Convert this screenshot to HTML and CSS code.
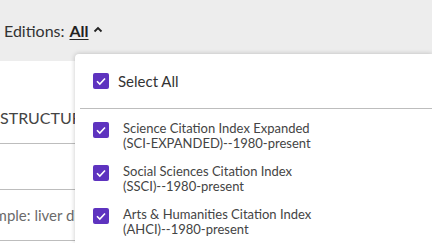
FILE: index.html
```html
<!DOCTYPE html>
<html>
<head>
<meta charset="utf-8">
<link rel="stylesheet" href="styles.css">
</head>
<body>
<div class="header">
  <span class="label">Editions:</span>
  <span class="value">All</span>
  <svg class="caret" width="10" height="7" viewBox="0 0 10 7"><path d="M1.5 5.5 L5 2 L8.5 5.5" fill="none" stroke="#222" stroke-width="1.8"/></svg>
</div>
<div class="content">
  <div class="row row-first"><span class="field-text">STRUCTURE</span></div>
  <div class="row row-second"></div>
  <div class="row row-third"><span class="placeholder">Example: liver disease</span></div>
</div>
<div class="panel">
  <div class="select-all">
    <span class="cb"><svg width="16" height="16" viewBox="0 0 16 16"><path d="M4 8.2 L6.8 11 L12 5.5" fill="none" stroke="#fff" stroke-width="1.6"/></svg></span>
    <span class="select-text">Select All</span>
  </div>
  <div class="sep"></div>
  <div class="list">
    <div class="item">
      <span class="cb"><svg width="16" height="16" viewBox="0 0 16 16"><path d="M4 8.2 L6.8 11 L12 5.5" fill="none" stroke="#fff" stroke-width="1.6"/></svg></span>
      <span class="item-text">Science Citation Index Expanded<br>(SCI-EXPANDED)--1980-present</span>
    </div>
    <div class="item">
      <span class="cb"><svg width="16" height="16" viewBox="0 0 16 16"><path d="M4 8.2 L6.8 11 L12 5.5" fill="none" stroke="#fff" stroke-width="1.6"/></svg></span>
      <span class="item-text">Social Sciences Citation Index<br>(SSCI)--1980-present</span>
    </div>
    <div class="item">
      <span class="cb"><svg width="16" height="16" viewBox="0 0 16 16"><path d="M4 8.2 L6.8 11 L12 5.5" fill="none" stroke="#fff" stroke-width="1.6"/></svg></span>
      <span class="item-text">Arts &amp; Humanities Citation Index<br>(AHCI)--1980-present</span>
    </div>
  </div>
</div>
</body>
</html>
```
FILE: styles.css
```css
html, body {
  margin: 0;
  padding: 0;
  background: #fff;
  overflow: hidden;
}
body {
  font-family: Lato, "Liberation Sans", sans-serif;
  color: #333;
  width: 432px;
  height: 243px;
  position: relative;
}
.header {
  height: 61px;
  background: #ededed;
  display: flex;
  align-items: center;
  padding-left: 4px;
  padding-bottom: 1px;
  box-sizing: border-box;
  font-size: 16px;
  color: #333;
}
.header .label {
  margin-right: 5px;
}
.header .value {
  font-weight: bold;
  color: #222;
  text-decoration: underline;
  text-underline-offset: 2px;
}
.caret {
  margin-left: 4px;
  margin-top: -2px;
}
.content {
  display: flex;
  flex-direction: column;
}
.row {
  border-bottom: 1px solid #bdbdbd;
  display: flex;
  align-items: center;
  font-size: 15px;
  overflow: hidden;
  white-space: nowrap;
}
.row-first {
  height: 83px;
  padding-top: 30px;
  box-sizing: border-box;
}
.field-text {
  margin-left: 0;
  font-size: 16px;
  color: #444;
}
.row-second {
  height: 45px;
}
.row-third {
  height: 50px;
}
.placeholder {
  margin-left: -29px;
  color: #6b6b6b;
}
.panel {
  position: absolute;
  left: 75px;
  top: 54px;
  width: 357px;
  height: 189px;
  overflow: hidden;
  background: #fff;
  border-radius: 4px 0 0 0;
  box-shadow: 0 0 5px rgba(0, 0, 0, 0.22);
}
.cb {
  width: 16px;
  height: 16px;
  background: #5e33bf;
  border-radius: 2px;
  flex: none;
  display: block;
}
.cb svg {
  display: block;
}
.select-all {
  display: flex;
  align-items: center;
  padding: 18px 0 18px 18px;
}
.select-text {
  margin-left: 9px;
  font-size: 15px;
  color: #333;
}
.sep {
  margin-left: 5px;
  border-top: 1px solid #bdbdbd;
}
.list {
  display: flex;
  flex-direction: column;
  gap: 14px;
  padding: 13px 0 0 18px;
}
.item {
  display: flex;
  align-items: flex-start;
}
.item-text {
  margin-left: 14px;
  margin-top: -1px;
  font-size: 13px;
  line-height: 15px;
  color: #444;
}
```
